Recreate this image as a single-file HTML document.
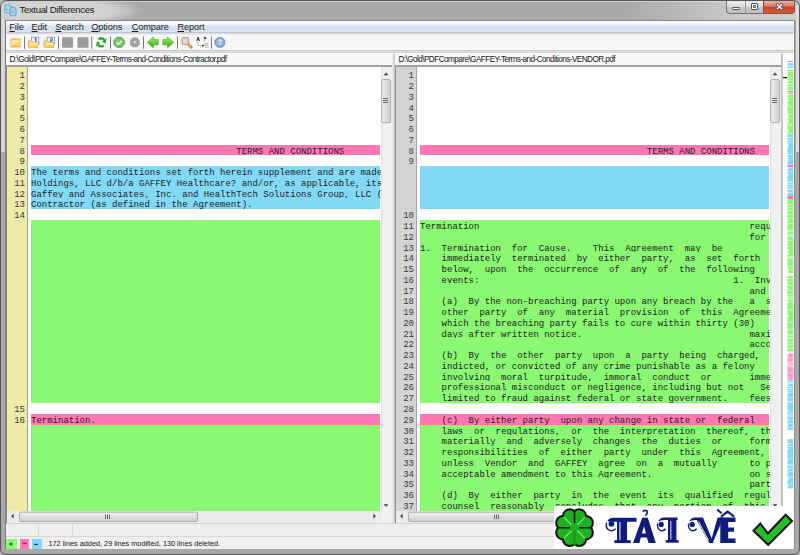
<!DOCTYPE html>
<html><head><meta charset="utf-8">
<style>
*{margin:0;padding:0;box-sizing:border-box}
html,body{width:800px;height:555px;overflow:hidden;background:#b4b4b4}
body{position:relative;font-family:"Liberation Sans",sans-serif}
.abs{position:absolute}
#frame{position:absolute;left:0;top:0;width:800px;height:555px;background:#a8a8a8;border:1px solid #555;border-radius:7px 7px 6px 6px}
#glow{position:absolute;left:1px;top:1px;width:160px;height:19px;border-radius:6px 0 0 0;background:radial-gradient(ellipse 95px 16px at 50px 10px,rgba(216,216,216,1) 0%,rgba(208,208,208,1) 65%,rgba(169,169,169,0) 100%)}
#title{position:absolute;left:19.5px;top:4px;font-size:9.6px;letter-spacing:-0.36px;color:#1a1a1a;white-space:nowrap}
.wbtn{position:absolute;top:1px;height:13px;border:1px solid #6d6d6d;border-top:none}
#client{position:absolute;left:6px;top:20px;width:788px;height:529px;background:#f0f0f0;border-top:1px solid #8a8a8a}
#menubar{position:absolute;left:6px;top:19.5px;width:788px;height:13.5px;background:linear-gradient(#fbfcfe 0,#f6f8fc 20%,#e9edf6 38%,#dae0f0 48%,#d9dff0 85%,#dde3f2 100%);border-top:1px solid #8a8a8a;border-bottom:1px solid #bcc4d6}
.menu{position:absolute;top:21.8px;font-size:9.2px;letter-spacing:-0.12px;color:#1a1a1a;white-space:nowrap}
#toolbar{position:absolute;left:6px;top:33px;width:788px;height:18px;background:linear-gradient(#d9d9d9 0,#ececec 1.5px,#f7f7f7 2.5px)}
.sep{position:absolute;top:36px;width:1px;height:13px;background:#9a9a9a}
.path{position:absolute;top:53px;height:13.8px;background:#f8f8f8;border:none;border-top:0;border-bottom:2px solid #a0a0a0;font-size:8.2px;letter-spacing:-0.56px;color:#1a1a1a;padding:2px 0 0 3.4px;white-space:nowrap;overflow:hidden}
.gut{position:absolute;top:67px;width:20px;height:444px}
.gline{position:absolute;top:67px;width:1px;height:444px;background:#a3a3a3}
.area{position:absolute;top:67px;width:354px;height:444px;background:#fff;overflow:hidden}
.bar{position:absolute;height:10.77px}
.tx{position:absolute;margin-top:2px;font-family:"Liberation Mono",monospace;font-size:9px;line-height:10.8px;white-space:pre;color:#1c1c1c}
.ln{position:absolute;margin-top:2px;width:18px;text-align:right;font-family:"Liberation Mono",monospace;font-size:9px;line-height:10.8px;color:#3a3a3a}
.vs{position:absolute;top:67px;width:11px;height:444px;background:#eaeaea;border-left:1px solid #f4f4f4}
.hs{position:absolute;top:511px;height:12px;background:#eaeaea}
.thumbv{position:absolute;background:linear-gradient(90deg,#e9e9e9,#dcdcdc 50%,#cfcfcf);border:1px solid #9c9c9c;border-radius:2px}
.thumbh{position:absolute;background:linear-gradient(#f1f1f1,#e2e2e2 50%,#d2d2d2);border:1px solid #9c9c9c;border-radius:2px}
#status{position:absolute;left:6px;top:537px;width:788px;height:12px;background:#f0eeee}
.leg{position:absolute;top:539px;width:11px;height:10px;font-size:9px;text-align:center;line-height:9px;font-weight:bold;color:#222}
</style></head><body>
<div id="frame"></div>
<div class="abs" style="left:1px;top:1px;width:798px;height:19px;border-radius:6px 6px 0 0;background:linear-gradient(90deg,rgba(168,168,168,0) 0,rgba(168,168,168,0) 620px,rgba(200,200,200,1) 730px,rgba(206,206,206,1) 798px)"></div>
<div class="abs" style="left:6px;top:1px;width:788px;height:1px;background:rgba(230,230,230,0.6)"></div>
<div class="abs" style="left:1px;top:6px;width:3.5px;height:145.5px;background:linear-gradient(90deg,#c8c8c8,#e2e2e2 50%,#c8c8c8)"></div>
<div class="abs" style="left:796px;top:6px;width:2.5px;height:145.5px;background:#dedede"></div>
<div class="abs" style="left:4.5px;top:20px;width:1.5px;height:529px;background:#7e7e7e"></div>
<div class="abs" style="left:793.5px;top:20px;width:1.2px;height:529px;background:#8e8e8e"></div>
<div id="glow"></div>
<!-- app icon -->
<svg class="abs" style="left:0;top:0" width="20" height="20" viewBox="0 0 20 20">
 <g fill="none" stroke="#4cb9f0" stroke-width="1.2">
  <path d="M6.2 4.8h3l1.8 1.8v5.2q0 1.2-1.2 1.2h-3.6q-1.2 0-1.2-1.2v-5.8q0-1.2 1.2-1.2z"/>
  <path d="M11.3 7.3h3l1.8 1.8v5.2q0 1.2-1.2 1.2h-3.6q-1.2 0-1.2-1.2v-5.8q0-1.2 1.2-1.2z" fill="#c8c8c8"/>
 </g>
 <path d="M6.5 8.2l2.6 1.3-2.6 1.3z M11.6 11.2h3l-1.5 1.8z" fill="#4cb9f0"/>
</svg>
<div id="title">Textual Differences</div>
<div class="wbtn" style="left:726px;width:38px;height:13px;border-radius:0 0 0 4px;background:linear-gradient(#eeeeee,#dcdcdc 45%,#c4c4c8 55%,#bebec4);border-color:#707070"></div>
<div class="abs" style="left:745px;top:1px;width:1px;height:12px;background:#9a9a9a"></div>
<div class="abs" style="left:732px;top:6.5px;width:8px;height:3px;background:#fafafa;border:1px solid #5a5a5a;border-radius:1px"></div>
<div class="abs" style="left:750.5px;top:3px;width:7.5px;height:7px;border:1px solid #555;background:#fff;border-radius:1px"></div>
<div class="abs" style="left:752.5px;top:5px;width:3.5px;height:2.5px;border:1px solid #666;background:#fff"></div>
<div class="wbtn" style="left:763px;width:32px;height:13px;background:linear-gradient(#eab0a0,#e08068 40%,#cc4226 55%,#d0603e);border-radius:0 0 4px 0;border-color:#8a4a40"></div>
<svg class="abs" style="left:774px;top:2px" width="11" height="10" viewBox="0 0 11 10"><path d="M3.4 2.8L7.6 6.8M7.6 2.8L3.4 6.8" stroke="#5a4a4a" stroke-width="3" stroke-linecap="square"/><path d="M3.4 2.8L7.6 6.8M7.6 2.8L3.4 6.8" stroke="#fff" stroke-width="1.5" stroke-linecap="square"/></svg>
<div id="client"></div>
<div id="menubar"></div>
<div class="menu" style="left:9.3px"><u>F</u>ile</div>
<div class="menu" style="left:31.5px"><u>E</u>dit</div>
<div class="menu" style="left:55.4px"><u>S</u>earch</div>
<div class="menu" style="left:91.3px"><u>O</u>ptions</div>
<div class="menu" style="left:131.8px"><u>C</u>ompare</div>
<div class="menu" style="left:177.6px"><u>R</u>eport</div>

<div id="toolbar"></div>
<div class="abs" style="left:6px;top:49.5px;width:788px;height:3.5px;background:linear-gradient(#c9c9c9 0,#cdcdcd 0.8px,#dcdcdc 1.2px,#dcdcdc 2.3px,#c9c9c9 2.8px,#c9c9c9 3.5px)"></div>
<svg class="abs" style="left:0;top:33px" width="240" height="18" viewBox="0 33 240 18">
 <defs>
  <linearGradient id="fold" x1="0" y1="0" x2="0" y2="1"><stop offset="0" stop-color="#fbe79a"/><stop offset="0.5" stop-color="#f4cf52"/><stop offset="1" stop-color="#f0c43a"/></linearGradient>
  <linearGradient id="grn" x1="0" y1="0" x2="0" y2="1"><stop offset="0" stop-color="#9bf05a"/><stop offset="1" stop-color="#2fae16"/></linearGradient>
  <radialGradient id="chk" cx="0.4" cy="0.35" r="0.7"><stop offset="0" stop-color="#b6e6a6"/><stop offset="1" stop-color="#3a9a3a"/></radialGradient>
  <radialGradient id="hlp" cx="0.4" cy="0.35" r="0.7"><stop offset="0" stop-color="#cfe0f5"/><stop offset="1" stop-color="#4f7fc0"/></radialGradient>
 </defs>
 <!-- folder -->
 <rect x="10.8" y="38.9" width="9.4" height="8" fill="#fbeeb4" stroke="#e6b85a" stroke-width="0.8"/>
 <rect x="10.8" y="38.9" width="9.4" height="1.3" fill="#e9c44a"/>
 <path d="M11.5 46.2 L19.6 46.2 L19.6 41.5 Q15 43 11.5 46.2Z" fill="#f4d64a" opacity="0.9"/>
 <rect x="10.8" y="45.8" width="9.4" height="1.1" fill="#eaa870"/>
<!-- seps -->
 <g fill="#7a7a7a"><rect x="24" y="36.4" width="1" height="12.4"/><rect x="58" y="36.4" width="1" height="12.4"/><rect x="91.2" y="36.4" width="1" height="12.4"/><rect x="110" y="36.4" width="1" height="12.4"/><rect x="143" y="36.4" width="1" height="12.4"/><rect x="177" y="36.4" width="1" height="12.4"/><rect x="211" y="36.4" width="1" height="12.4"/></g>
 <!-- folder + doc 1 -->
 <rect x="31.5" y="37.2" width="7.4" height="7" fill="#f4f8ff" stroke="#78a4e0" stroke-width="0.9"/>
 <path d="M34.8 38.8 q1-0.2 1-1 v4.6" stroke="#2a56a8" stroke-width="1.2" fill="none"/>
 <path d="M28.2 47.3 V40.4 H31.8 L32.6 42.2" fill="#fbe9a8" stroke="#e8b456" stroke-width="0.8"/>
 <rect x="29.2" y="42.3" width="8.8" height="5.2" fill="#fbeeb4" stroke="#e6a860" stroke-width="0.8"/>
 <rect x="29.6" y="44.8" width="8" height="2.4" fill="#f4d64a"/>
 <!-- folder + doc 2 -->
 <rect x="47.2" y="37.2" width="7.4" height="7" fill="#f4f8ff" stroke="#78a4e0" stroke-width="0.9"/>
 <path d="M50.1 38.9h2.2v1.9h-2v1.9h2.2" stroke="#2a56a8" stroke-width="1" fill="none"/>
 <path d="M43.9 47.3 V40.4 H47.5 L48.3 42.2" fill="#fbe9a8" stroke="#e8b456" stroke-width="0.8"/>
 <rect x="44.9" y="42.3" width="8.8" height="5.2" fill="#fbeeb4" stroke="#e6a860" stroke-width="0.8"/>
 <rect x="45.3" y="44.8" width="8" height="2.4" fill="#f4d64a"/>
<!-- gray squares -->
 <rect x="62" y="37.3" width="11" height="10.5" rx="1" fill="#9b9b9b"/>
 <rect x="77.5" y="37.3" width="11" height="10.5" rx="1" fill="#9b9b9b"/>
 <!-- refresh -->
 <path d="M98.6 39.3 A4 4 0 0 1 104.3 39.8" fill="none" stroke="#1e9e1e" stroke-width="2.2"/>
 <path d="M102.2 41.6 L106.6 38 L105.2 43.8 Z" fill="#18a018"/>
 <path d="M103.8 45.5 A4 4 0 0 1 98.1 45" fill="none" stroke="#1e9e1e" stroke-width="2.2"/>
 <path d="M100.2 43.2 L95.8 46.8 L97.2 41 Z" fill="#22a822"/>
 <!-- check octagon -->
 <path d="M116.9 37.4h4.4l2.9 2.9v4.1l-2.9 2.8h-4.4l-2.9-2.8v-4.1z" fill="#5cbc5c" stroke="#3c9e3c" stroke-width="0.8"/>
 <path d="M117 39h4l2 2v3l-2 2h-4l-2-2v-3z" fill="#7ccc7c"/>
 <path d="M116.8 42.5l1.6 1.6 3.2-3" stroke="#fff" stroke-width="1.4" fill="none"/>
 <!-- gray x -->
 <path d="M132.6 37.4h4.4l2.7 2.9v4.1l-2.7 2.8h-4.4l-2.6-2.8v-4.1z" fill="#a2a2a2"/>
 <path d="M133.6 41.1l2.4 2.4M136 41.1l-2.4 2.4" stroke="#f0f0f0" stroke-width="0.9"/>
<!-- arrows -->
 <path d="M147.2 42.4 L153.4 37 L153.6 39.4 L158.2 39.4 L158.2 44.8 L153.6 44.8 L153.4 47.8 Z" fill="url(#grn)" stroke="#2a9a18" stroke-width="0.5" stroke-linejoin="round"/>
 <path d="M173.8 42.4 L167.6 37 L167.4 39.4 L162.8 39.4 L162.8 44.8 L167.4 44.8 L167.6 47.8 Z" fill="url(#grn)" stroke="#2a9a18" stroke-width="0.5" stroke-linejoin="round"/>
 <!-- magnifier -->
 <path d="M187.4 43.8 L191.2 47.2" stroke="#c77c3c" stroke-width="2.8" stroke-linecap="round"/>
 <path d="M187.6 44.2 L190.6 46.8" stroke="#e8c070" stroke-width="1.2" stroke-linecap="round"/>
 <rect x="182" y="37.6" width="6.6" height="6.8" rx="2" fill="#c9e0f6" stroke="#d9a050" stroke-width="1.3"/>
 <!-- A B -->
 <path d="M196.6 41.2 L198.2 37 L199.6 41.2 M197.2 39.8h1.9" stroke="#3a3a3a" stroke-width="1" fill="none"/>
 <path d="M198 42 q-0.4 2.2 0.6 3 q0.8 0.6 3.2 0.6" stroke="#555" stroke-width="0.8" fill="none" stroke-dasharray="1 0.6"/>
 <path d="M202.2 44.2 L204.4 45.6 L202.2 47 Z" fill="#222"/>
 <path d="M204 37 h2.2 v1.8 h-2.2z" fill="#333"/>
 <path d="M204.3 39 v3" stroke="#aaa" stroke-width="0.8"/>
 <text x="204.6" y="47.6" font-family="Liberation Sans" font-size="6.4" fill="#a8a8a8">B</text>
 <!-- help -->
 <path d="M217.8 37.5h4.2l2.8 2.8v4.1l-2.8 2.8h-4.2l-2.8-2.8v-4.1z" fill="#6f98d2" stroke="#5a84c0" stroke-width="0.6"/>
 <path d="M218.2 38.8h3.4l2 2v3.2l-2 2h-3.4l-2-2v-3.2z" fill="#9ab8e4"/>
 <path d="M218.6 41.2 q0-1.5 1.4-1.5 q1.4 0 1.4 1.3 q0 0.9-1.4 1.4 v0.8" stroke="#fff" stroke-width="0.9" fill="none"/>
 <circle cx="220" cy="44.8" r="0.5" fill="#fff"/>
</svg>


<!-- left panel -->
<div class="path" style="left:6px;width:386px">D:\Gold\PDFCompare\GAFFEY-Terms-and-Conditions-Contractor.pdf</div>
<div class="gut" style="left:7px;background:#eeeba8"></div>
<div class="gline" style="left:27px"></div>
<div class="abs" style="left:6px;top:67px;width:1px;height:456px;background:#8c8c8c"></div>
<div class="area" style="left:28px"></div>
<div class="abs" style="left:31px;top:67px;width:350px;height:444px;overflow:hidden">
<div class="bar" style="left:0;top:77.66px;width:349px;background:#ff78b4"></div>
<div class="tx" style="left:0;top:77.66px">                                      TERMS AND CONDITIONS</div>
<div class="bar" style="left:0;top:99.19px;width:349px;background:#82d9f5"></div>
<div class="tx" style="left:0;top:99.19px">The terms and conditions set forth herein supplement and are made</div>
<div class="bar" style="left:0;top:109.95px;width:349px;background:#82d9f5"></div>
<div class="tx" style="left:0;top:109.95px">Holdings, LLC d/b/a GAFFEY Healthcare? and/or, as applicable, its</div>
<div class="bar" style="left:0;top:120.72px;width:349px;background:#82d9f5"></div>
<div class="tx" style="left:0;top:120.72px">Gaffey and Associates, Inc. and HealthTech Solutions Group, LLC (</div>
<div class="bar" style="left:0;top:131.48px;width:349px;background:#82d9f5"></div>
<div class="tx" style="left:0;top:131.48px">Contractor (as defined in the Agreement).</div>
<div class="bar" style="left:0;top:153.01px;width:349px;background:#8af872"></div>
<div class="bar" style="left:0;top:163.78px;width:349px;background:#8af872"></div>
<div class="bar" style="left:0;top:174.54px;width:349px;background:#8af872"></div>
<div class="bar" style="left:0;top:185.31px;width:349px;background:#8af872"></div>
<div class="bar" style="left:0;top:196.07px;width:349px;background:#8af872"></div>
<div class="bar" style="left:0;top:206.84px;width:349px;background:#8af872"></div>
<div class="bar" style="left:0;top:217.60px;width:349px;background:#8af872"></div>
<div class="bar" style="left:0;top:228.37px;width:349px;background:#8af872"></div>
<div class="bar" style="left:0;top:239.13px;width:349px;background:#8af872"></div>
<div class="bar" style="left:0;top:249.90px;width:349px;background:#8af872"></div>
<div class="bar" style="left:0;top:260.66px;width:349px;background:#8af872"></div>
<div class="bar" style="left:0;top:271.43px;width:349px;background:#8af872"></div>
<div class="bar" style="left:0;top:282.19px;width:349px;background:#8af872"></div>
<div class="bar" style="left:0;top:292.96px;width:349px;background:#8af872"></div>
<div class="bar" style="left:0;top:303.72px;width:349px;background:#8af872"></div>
<div class="bar" style="left:0;top:314.49px;width:349px;background:#8af872"></div>
<div class="bar" style="left:0;top:325.25px;width:349px;background:#8af872"></div>
<div class="bar" style="left:0;top:346.78px;width:349px;background:#ff78b4"></div>
<div class="tx" style="left:0;top:346.78px">Termination.</div>
<div class="bar" style="left:0;top:357.55px;width:349px;background:#8af872"></div>
<div class="bar" style="left:0;top:368.31px;width:349px;background:#8af872"></div>
<div class="bar" style="left:0;top:379.08px;width:349px;background:#8af872"></div>
<div class="bar" style="left:0;top:389.84px;width:349px;background:#8af872"></div>
<div class="bar" style="left:0;top:400.61px;width:349px;background:#8af872"></div>
<div class="bar" style="left:0;top:411.37px;width:349px;background:#8af872"></div>
<div class="bar" style="left:0;top:422.14px;width:349px;background:#8af872"></div>
<div class="bar" style="left:0;top:432.90px;width:349px;background:#8af872"></div>
<div class="bar" style="left:0;top:443.67px;width:349px;background:#8af872"></div>
</div>
<div class="vs" style="left:381px"></div>
<div class="hs" style="left:7px;width:385px"></div>

<!-- splitter -->
<div class="abs" style="left:392px;top:53px;width:3px;height:470px;background:linear-gradient(90deg,#f2f2f2,#c4c4c4)"></div>
<div class="abs" style="left:395px;top:65px;width:1.5px;height:458px;background:#8c8c8c"></div>

<!-- right panel -->
<div class="path" style="left:395px;width:386px">D:\Gold\PDFCompare\GAFFEY-Terms-and-Conditions-VENDOR.pdf</div>
<div class="gut" style="left:396px;background:#d4d4d4"></div>
<div class="gline" style="left:416px"></div>
<div class="area" style="left:417px"></div>
<div class="abs" style="left:420px;top:67px;width:350px;height:444px;overflow:hidden">
<div class="bar" style="left:0;top:77.66px;width:349px;background:#ff78b4"></div>
<div class="tx" style="left:0;top:77.66px">                                          TERMS AND CONDITIONS</div>
<div class="bar" style="left:0;top:99.19px;width:349px;background:#82d9f5"></div>
<div class="bar" style="left:0;top:109.95px;width:349px;background:#82d9f5"></div>
<div class="bar" style="left:0;top:120.72px;width:349px;background:#82d9f5"></div>
<div class="bar" style="left:0;top:131.48px;width:349px;background:#82d9f5"></div>
<div class="bar" style="left:0;top:153.01px;width:349px;background:#8af872"></div>
<div class="tx" style="left:0;top:153.01px">Termination                                                  requ</div>
<div class="bar" style="left:0;top:163.78px;width:349px;background:#8af872"></div>
<div class="tx" style="left:0;top:163.78px">                                                             for</div>
<div class="bar" style="left:0;top:174.54px;width:349px;background:#8af872"></div>
<div class="tx" style="left:0;top:174.54px">1.  Termination  for  Cause.    This  Agreement  may  be</div>
<div class="bar" style="left:0;top:185.31px;width:349px;background:#8af872"></div>
<div class="tx" style="left:0;top:185.31px">    immediately  terminated  by  either  party,  as  set  forth</div>
<div class="bar" style="left:0;top:196.07px;width:349px;background:#8af872"></div>
<div class="tx" style="left:0;top:196.07px">    below,  upon  the  occurrence  of  any  of  the  following</div>
<div class="bar" style="left:0;top:206.84px;width:349px;background:#8af872"></div>
<div class="tx" style="left:0;top:206.84px">    events:                                               1.  Inv</div>
<div class="bar" style="left:0;top:217.60px;width:349px;background:#8af872"></div>
<div class="tx" style="left:0;top:217.60px">                                                             and</div>
<div class="bar" style="left:0;top:228.37px;width:349px;background:#8af872"></div>
<div class="tx" style="left:0;top:228.37px">    (a)  By the non-breaching party upon any breach by the   a  s</div>
<div class="bar" style="left:0;top:239.13px;width:349px;background:#8af872"></div>
<div class="tx" style="left:0;top:239.13px">    other  party  of  any  material  provision  of  this  Agreement</div>
<div class="bar" style="left:0;top:249.90px;width:349px;background:#8af872"></div>
<div class="tx" style="left:0;top:249.90px">    which the breaching party fails to cure within thirty (30)</div>
<div class="bar" style="left:0;top:260.66px;width:349px;background:#8af872"></div>
<div class="tx" style="left:0;top:260.66px">    days after written notice.                               maxi</div>
<div class="bar" style="left:0;top:271.43px;width:349px;background:#8af872"></div>
<div class="tx" style="left:0;top:271.43px">                                                             acco</div>
<div class="bar" style="left:0;top:282.19px;width:349px;background:#8af872"></div>
<div class="tx" style="left:0;top:282.19px">    (b)  By  the  other  party  upon  a  party  being  charged,</div>
<div class="bar" style="left:0;top:292.96px;width:349px;background:#8af872"></div>
<div class="tx" style="left:0;top:292.96px">    indicted, or convicted of any crime punishable as a felony</div>
<div class="bar" style="left:0;top:303.72px;width:349px;background:#8af872"></div>
<div class="tx" style="left:0;top:303.72px">    involving  moral  turpitude,  immoral  conduct  or       imme</div>
<div class="bar" style="left:0;top:314.49px;width:349px;background:#8af872"></div>
<div class="tx" style="left:0;top:314.49px">    professional misconduct or negligence, including but not   Se</div>
<div class="bar" style="left:0;top:325.25px;width:349px;background:#8af872"></div>
<div class="tx" style="left:0;top:325.25px">    limited to fraud against federal or state government.    fees</div>
<div class="bar" style="left:0;top:346.78px;width:349px;background:#ff78b4"></div>
<div class="tx" style="left:0;top:346.78px">    (c)  By either party  upon any change in state or  federal</div>
<div class="bar" style="left:0;top:357.55px;width:349px;background:#8af872"></div>
<div class="tx" style="left:0;top:357.55px">    laws  or  regulations,  or  the  interpretation  thereof,  th</div>
<div class="bar" style="left:0;top:368.31px;width:349px;background:#8af872"></div>
<div class="tx" style="left:0;top:368.31px">    materially  and  adversely  changes  the  duties  or     form</div>
<div class="bar" style="left:0;top:379.08px;width:349px;background:#8af872"></div>
<div class="tx" style="left:0;top:379.08px">    responsibilities  of  either  party  under  this  Agreement,</div>
<div class="bar" style="left:0;top:389.84px;width:349px;background:#8af872"></div>
<div class="tx" style="left:0;top:389.84px">    unless  Vendor  and  GAFFEY  agree  on  a  mutually      to p</div>
<div class="bar" style="left:0;top:400.61px;width:349px;background:#8af872"></div>
<div class="tx" style="left:0;top:400.61px">    acceptable amendment to this Agreement.                  on s</div>
<div class="bar" style="left:0;top:411.37px;width:349px;background:#8af872"></div>
<div class="tx" style="left:0;top:411.37px">                                                             part</div>
<div class="bar" style="left:0;top:422.14px;width:349px;background:#8af872"></div>
<div class="tx" style="left:0;top:422.14px">    (d)  By  either  party  in  the  event  its  qualified  regul</div>
<div class="bar" style="left:0;top:432.90px;width:349px;background:#8af872"></div>
<div class="tx" style="left:0;top:432.90px">    counsel  reasonably  concludes  that  any  portion  of  this</div>
</div>
<div class="vs" style="left:770px"></div>
<div class="hs" style="left:396px;width:385px"></div>

<!-- overview -->
<div class="abs" style="left:781px;top:53px;width:2px;height:470px;background:#c4c4c4"></div>
<div class="abs" style="left:783px;top:53px;width:11px;height:470px;background:#fff"></div>
<svg class="abs" style="left:783px;top:52px" width="11" height="471" viewBox="783 52 11 471">
<rect x="787.5" y="61" width="5.7" height="1" fill="rgb(255, 120, 180)"/>
<rect x="787.5" y="63" width="5.7" height="1" fill="rgb(130, 217, 245)"/>
<rect x="787.5" y="64" width="5.7" height="1" fill="rgb(130, 217, 245)"/>
<rect x="787.5" y="65" width="5.7" height="1" fill="rgb(186, 234, 249)"/>
<rect x="787.5" y="66" width="5.7" height="1" fill="rgb(186, 234, 249)"/>
<rect x="787.5" y="67" width="5.7" height="1" fill="rgb(130, 217, 245)"/>
<rect x="787.5" y="70" width="5.7" height="1" fill="rgb(138, 248, 114)"/>
<rect x="787.5" y="71" width="5.7" height="1" fill="rgb(190, 251, 177)"/>
<rect x="787.5" y="72" width="5.7" height="1" fill="rgb(138, 248, 114)"/>
<rect x="787.5" y="73" width="5.7" height="1" fill="rgb(138, 248, 114)"/>
<rect x="788.5" y="74" width="4.7" height="1" fill="rgb(138, 248, 114)"/>
<rect x="787.5" y="75" width="5.7" height="1" fill="rgb(138, 248, 114)"/>
<rect x="787.5" y="76" width="5.7" height="1" fill="rgb(190, 251, 177)"/>
<rect x="787.5" y="77" width="5.7" height="1" fill="rgb(138, 248, 114)"/>
<rect x="787.5" y="78" width="5.7" height="1" fill="rgb(190, 251, 177)"/>
<rect x="787.5" y="79" width="5.7" height="1" fill="rgb(138, 248, 114)"/>
<rect x="787.5" y="80" width="5.7" height="1" fill="rgb(190, 251, 177)"/>
<rect x="788.5" y="81" width="4.7" height="1" fill="rgb(138, 248, 114)"/>
<rect x="787.5" y="82" width="5.7" height="1" fill="rgb(138, 248, 114)"/>
<rect x="787.5" y="83" width="5.7" height="1" fill="rgb(190, 251, 177)"/>
<rect x="787.5" y="84" width="5.7" height="1" fill="rgb(190, 251, 177)"/>
<rect x="787.5" y="85" width="5.7" height="1" fill="rgb(138, 248, 114)"/>
<rect x="787.5" y="86" width="5.7" height="1" fill="rgb(190, 251, 177)"/>
<rect x="787.5" y="87" width="5.7" height="1" fill="rgb(138, 248, 114)"/>
<rect x="787.5" y="88" width="5.7" height="1" fill="rgb(138, 248, 114)"/>
<rect x="787.5" y="89" width="5.7" height="1" fill="rgb(138, 248, 114)"/>
<rect x="788.5" y="90" width="4.7" height="0.5" fill="rgb(138, 248, 114)"/>
<rect x="787.5" y="91" width="5.7" height="1" fill="rgb(255, 120, 180)"/>
<rect x="787.5" y="92" width="5.7" height="1" fill="rgb(255, 180, 213)"/>
<rect x="788.5" y="93" width="4.7" height="1" fill="rgb(138, 248, 114)"/>
<rect x="787.5" y="94" width="5.7" height="1" fill="rgb(190, 251, 177)"/>
<rect x="788.5" y="95" width="4.7" height="1" fill="rgb(138, 248, 114)"/>
<rect x="787.5" y="96" width="5.7" height="1" fill="rgb(138, 248, 114)"/>
<rect x="787.5" y="97" width="5.7" height="1" fill="rgb(190, 251, 177)"/>
<rect x="787.5" y="98" width="5.7" height="1" fill="rgb(138, 248, 114)"/>
<rect x="788.5" y="99" width="4.7" height="1" fill="rgb(138, 248, 114)"/>
<rect x="788.5" y="100" width="4.7" height="1" fill="rgb(138, 248, 114)"/>
<rect x="787.5" y="101" width="5.7" height="1" fill="rgb(138, 248, 114)"/>
<rect x="787.5" y="102" width="5.7" height="1" fill="rgb(138, 248, 114)"/>
<rect x="787.5" y="103" width="5.7" height="1" fill="rgb(138, 248, 114)"/>
<rect x="788.5" y="104" width="4.7" height="1" fill="rgb(138, 248, 114)"/>
<rect x="787.5" y="105" width="5.7" height="1" fill="rgb(138, 248, 114)"/>
<rect x="787.5" y="106" width="5.7" height="1" fill="rgb(190, 251, 177)"/>
<rect x="787.5" y="107" width="5.7" height="1" fill="rgb(138, 248, 114)"/>
<rect x="787.5" y="108" width="5.7" height="1" fill="rgb(138, 248, 114)"/>
<rect x="787.5" y="109" width="5.7" height="1" fill="rgb(138, 248, 114)"/>
<rect x="787.5" y="110" width="5.7" height="1" fill="rgb(138, 248, 114)"/>
<rect x="787.5" y="111" width="5.7" height="1" fill="rgb(138, 248, 114)"/>
<rect x="787.5" y="112" width="5.7" height="1" fill="rgb(138, 248, 114)"/>
<rect x="788.5" y="113" width="4.7" height="1" fill="rgb(138, 248, 114)"/>
<rect x="787.5" y="114" width="5.7" height="1" fill="rgb(190, 251, 177)"/>
<rect x="788.5" y="115" width="4.7" height="1" fill="rgb(138, 248, 114)"/>
<rect x="788.5" y="116" width="4.7" height="1" fill="rgb(138, 248, 114)"/>
<rect x="788.5" y="117" width="4.7" height="1" fill="rgb(138, 248, 114)"/>
<rect x="787.5" y="118" width="5.7" height="1" fill="rgb(190, 251, 177)"/>
<rect x="787.5" y="119" width="5.7" height="1" fill="rgb(138, 248, 114)"/>
<rect x="788.5" y="120" width="4.7" height="1" fill="rgb(138, 248, 114)"/>
<rect x="788.5" y="121" width="4.7" height="1" fill="rgb(138, 248, 114)"/>
<rect x="788.5" y="122" width="4.7" height="1" fill="rgb(138, 248, 114)"/>
<rect x="787.5" y="123" width="5.7" height="1" fill="rgb(138, 248, 114)"/>
<rect x="787.5" y="124" width="5.7" height="1" fill="rgb(190, 251, 177)"/>
<rect x="787.5" y="125" width="5.7" height="1" fill="rgb(138, 248, 114)"/>
<rect x="787.5" y="126" width="5.7" height="1" fill="rgb(190, 251, 177)"/>
<rect x="787.5" y="127" width="5.7" height="1" fill="rgb(138, 248, 114)"/>
<rect x="787.5" y="128" width="5.7" height="1" fill="rgb(138, 248, 114)"/>
<rect x="787.5" y="129" width="5.7" height="1" fill="rgb(138, 248, 114)"/>
<rect x="788.5" y="130" width="4.7" height="1" fill="rgb(138, 248, 114)"/>
<rect x="788.5" y="131" width="4.7" height="1" fill="rgb(138, 248, 114)"/>
<rect x="787.5" y="132" width="5.7" height="1" fill="rgb(138, 248, 114)"/>
<rect x="787.5" y="133" width="5.7" height="1" fill="rgb(190, 251, 177)"/>
<rect x="787.5" y="134" width="5.7" height="1" fill="rgb(130, 217, 245)"/>
<rect x="787.5" y="135" width="5.7" height="1" fill="rgb(130, 217, 245)"/>
<rect x="787.5" y="136" width="5.7" height="1" fill="rgb(130, 217, 245)"/>
<rect x="787.5" y="137" width="5.7" height="1" fill="rgb(186, 234, 249)"/>
<rect x="788.5" y="138" width="4.7" height="1" fill="rgb(130, 217, 245)"/>
<rect x="787.5" y="139" width="5.7" height="1" fill="rgb(130, 217, 245)"/>
<rect x="787.5" y="140" width="5.7" height="1" fill="rgb(186, 234, 249)"/>
<rect x="787.5" y="141" width="5.7" height="1" fill="rgb(130, 217, 245)"/>
<rect x="787.5" y="142" width="5.7" height="1" fill="rgb(186, 234, 249)"/>
<rect x="787.5" y="143" width="5.7" height="1" fill="rgb(130, 217, 245)"/>
<rect x="788.5" y="144" width="4.7" height="1" fill="rgb(130, 217, 245)"/>
<rect x="788.5" y="145" width="4.7" height="1" fill="rgb(130, 217, 245)"/>
<rect x="787.5" y="146" width="5.7" height="1" fill="rgb(130, 217, 245)"/>
<rect x="788.5" y="147" width="4.7" height="1" fill="rgb(130, 217, 245)"/>
<rect x="787.5" y="148" width="5.7" height="1" fill="rgb(130, 217, 245)"/>
<rect x="787.5" y="149" width="5.7" height="1" fill="rgb(130, 217, 245)"/>
<rect x="787.5" y="150" width="5.7" height="1" fill="rgb(130, 217, 245)"/>
<rect x="787.5" y="151" width="5.7" height="1" fill="rgb(130, 217, 245)"/>
<rect x="787.5" y="152" width="5.7" height="1" fill="rgb(130, 217, 245)"/>
<rect x="787.5" y="153" width="5.7" height="1" fill="rgb(130, 217, 245)"/>
<rect x="787.5" y="154" width="5.7" height="1" fill="rgb(186, 234, 249)"/>
<rect x="787.5" y="155" width="5.7" height="1" fill="rgb(130, 217, 245)"/>
<rect x="787.5" y="156" width="5.7" height="1" fill="rgb(130, 217, 245)"/>
<rect x="788.5" y="157" width="4.7" height="1" fill="rgb(130, 217, 245)"/>
<rect x="787.5" y="158" width="5.7" height="1" fill="rgb(130, 217, 245)"/>
<rect x="788.5" y="159" width="4.7" height="1" fill="rgb(130, 217, 245)"/>
<rect x="788.5" y="160" width="4.7" height="1" fill="rgb(130, 217, 245)"/>
<rect x="787.5" y="161" width="5.7" height="1" fill="rgb(130, 217, 245)"/>
<rect x="787.5" y="162" width="5.7" height="1" fill="rgb(130, 217, 245)"/>
<rect x="787.5" y="163" width="5.7" height="1" fill="rgb(130, 217, 245)"/>
<rect x="787.5" y="164" width="5.7" height="1" fill="rgb(255, 180, 213)"/>
<rect x="787.5" y="165" width="5.7" height="1" fill="rgb(255, 120, 180)"/>
<rect x="787.5" y="166" width="5.7" height="1" fill="rgb(255, 120, 180)"/>
<rect x="787.5" y="167" width="5.7" height="1" fill="rgb(186, 234, 249)"/>
<rect x="788.5" y="168" width="4.7" height="1" fill="rgb(130, 217, 245)"/>
<rect x="787.5" y="169" width="5.7" height="1" fill="rgb(130, 217, 245)"/>
<rect x="787.5" y="170" width="5.7" height="1" fill="rgb(130, 217, 245)"/>
<rect x="787.5" y="171" width="5.7" height="1" fill="rgb(186, 234, 249)"/>
<rect x="787.5" y="172" width="5.7" height="1" fill="rgb(130, 217, 245)"/>
<rect x="787.5" y="173" width="5.7" height="1" fill="rgb(130, 217, 245)"/>
<rect x="788.5" y="174" width="4.7" height="1" fill="rgb(130, 217, 245)"/>
<rect x="787.5" y="175" width="5.7" height="1" fill="rgb(130, 217, 245)"/>
<rect x="787.5" y="176" width="5.7" height="1" fill="rgb(130, 217, 245)"/>
<rect x="787.5" y="177" width="5.7" height="1" fill="rgb(130, 217, 245)"/>
<rect x="787.5" y="178" width="5.7" height="1" fill="rgb(130, 217, 245)"/>
<rect x="787.5" y="179" width="5.7" height="1" fill="rgb(130, 217, 245)"/>
<rect x="787.5" y="180" width="5.7" height="1" fill="rgb(130, 217, 245)"/>
<rect x="787.5" y="181" width="5.7" height="1" fill="rgb(186, 234, 249)"/>
<rect x="787.5" y="182" width="5.7" height="1" fill="rgb(186, 234, 249)"/>
<rect x="787.5" y="183" width="5.7" height="1" fill="rgb(130, 217, 245)"/>
<rect x="787.5" y="184" width="5.7" height="1" fill="rgb(186, 234, 249)"/>
<rect x="787.5" y="185" width="5.7" height="1" fill="rgb(130, 217, 245)"/>
<rect x="787.5" y="186" width="5.7" height="1" fill="rgb(186, 234, 249)"/>
<rect x="787.5" y="187" width="5.7" height="1" fill="rgb(130, 217, 245)"/>
<rect x="787.5" y="188" width="5.7" height="1" fill="rgb(186, 234, 249)"/>
<rect x="787.5" y="189" width="5.7" height="1" fill="rgb(186, 234, 249)"/>
<rect x="787.5" y="190" width="5.7" height="1" fill="rgb(130, 217, 245)"/>
<rect x="787.5" y="191" width="5.7" height="1" fill="rgb(130, 217, 245)"/>
<rect x="787.5" y="192" width="5.7" height="1" fill="rgb(186, 234, 249)"/>
<rect x="788.5" y="193" width="4.7" height="1" fill="rgb(130, 217, 245)"/>
<rect x="787.5" y="194" width="5.7" height="1" fill="rgb(130, 217, 245)"/>
<rect x="787.5" y="195" width="5.7" height="1" fill="rgb(130, 217, 245)"/>
<rect x="787.5" y="196" width="5.7" height="1" fill="rgb(255, 120, 180)"/>
<rect x="787.5" y="197" width="5.7" height="1" fill="rgb(255, 120, 180)"/>
<rect x="787.5" y="198" width="5.7" height="1" fill="rgb(255, 120, 180)"/>
<rect x="787.5" y="199" width="5.7" height="1" fill="rgb(138, 248, 114)"/>
<rect x="787.5" y="200" width="5.7" height="1" fill="rgb(138, 248, 114)"/>
<rect x="787.5" y="201" width="5.7" height="1" fill="rgb(138, 248, 114)"/>
<rect x="787.5" y="202" width="5.7" height="1" fill="rgb(138, 248, 114)"/>
<rect x="787.5" y="203" width="5.7" height="1" fill="rgb(138, 248, 114)"/>
<rect x="787.5" y="204" width="5.7" height="1" fill="rgb(190, 251, 177)"/>
<rect x="787.5" y="205" width="5.7" height="1" fill="rgb(138, 248, 114)"/>
<rect x="787.5" y="206" width="5.7" height="1" fill="rgb(138, 248, 114)"/>
<rect x="787.5" y="207" width="5.7" height="1" fill="rgb(190, 251, 177)"/>
<rect x="787.5" y="208" width="5.7" height="1" fill="rgb(138, 248, 114)"/>
<rect x="787.5" y="209" width="5.7" height="1" fill="rgb(138, 248, 114)"/>
<rect x="787.5" y="210" width="5.7" height="1" fill="rgb(190, 251, 177)"/>
<rect x="787.5" y="211" width="5.7" height="1" fill="rgb(138, 248, 114)"/>
<rect x="787.5" y="212" width="5.7" height="1" fill="rgb(138, 248, 114)"/>
<rect x="787.5" y="213" width="5.7" height="1" fill="rgb(138, 248, 114)"/>
<rect x="787.5" y="214" width="5.7" height="1" fill="rgb(190, 251, 177)"/>
<rect x="787.5" y="215" width="5.7" height="1" fill="rgb(138, 248, 114)"/>
<rect x="787.5" y="216" width="5.7" height="1" fill="rgb(138, 248, 114)"/>
<rect x="787.5" y="217" width="5.7" height="1" fill="rgb(138, 248, 114)"/>
<rect x="787.5" y="218" width="5.7" height="1" fill="rgb(190, 251, 177)"/>
<rect x="787.5" y="219" width="5.7" height="1" fill="rgb(138, 248, 114)"/>
<rect x="788.5" y="220" width="4.7" height="1" fill="rgb(138, 248, 114)"/>
<rect x="787.5" y="221" width="5.7" height="1" fill="rgb(138, 248, 114)"/>
<rect x="787.5" y="222" width="5.7" height="1" fill="rgb(138, 248, 114)"/>
<rect x="787.5" y="223" width="5.7" height="1" fill="rgb(190, 251, 177)"/>
<rect x="788.5" y="224" width="4.7" height="1" fill="rgb(138, 248, 114)"/>
<rect x="787.5" y="225" width="5.7" height="1" fill="rgb(138, 248, 114)"/>
<rect x="787.5" y="226" width="5.7" height="1" fill="rgb(138, 248, 114)"/>
<rect x="787.5" y="227" width="5.7" height="1" fill="rgb(138, 248, 114)"/>
<rect x="787.5" y="228" width="5.7" height="1" fill="rgb(138, 248, 114)"/>
<rect x="787.5" y="229" width="5.7" height="1" fill="rgb(138, 248, 114)"/>
<rect x="787.5" y="230" width="5.7" height="1" fill="rgb(190, 251, 177)"/>
<rect x="787.5" y="231" width="5.7" height="1" fill="rgb(190, 251, 177)"/>
<rect x="787.5" y="232" width="5.7" height="1" fill="rgb(138, 248, 114)"/>
<rect x="787.5" y="233" width="5.7" height="1" fill="rgb(138, 248, 114)"/>
<rect x="787.5" y="234" width="5.7" height="1" fill="rgb(190, 251, 177)"/>
<rect x="787.5" y="235" width="5.7" height="1" fill="rgb(190, 251, 177)"/>
<rect x="787.5" y="236" width="5.7" height="1" fill="rgb(190, 251, 177)"/>
<rect x="787.5" y="237" width="5.7" height="1" fill="rgb(138, 248, 114)"/>
<rect x="787.5" y="238" width="5.7" height="1" fill="rgb(138, 248, 114)"/>
<rect x="787.5" y="239" width="5.7" height="1" fill="rgb(138, 248, 114)"/>
<rect x="787.5" y="240" width="5.7" height="1" fill="rgb(190, 251, 177)"/>
<rect x="787.5" y="241" width="5.7" height="1" fill="rgb(138, 248, 114)"/>
<rect x="787.5" y="242" width="5.7" height="1" fill="rgb(138, 248, 114)"/>
<rect x="787.5" y="243" width="5.7" height="1" fill="rgb(138, 248, 114)"/>
<rect x="787.5" y="244" width="5.7" height="1" fill="rgb(138, 248, 114)"/>
<rect x="787.5" y="245" width="5.7" height="1" fill="rgb(138, 248, 114)"/>
<rect x="788.5" y="246" width="4.7" height="1" fill="rgb(138, 248, 114)"/>
<rect x="787.5" y="247" width="5.7" height="1" fill="rgb(138, 248, 114)"/>
<rect x="787.5" y="248" width="5.7" height="1" fill="rgb(138, 248, 114)"/>
<rect x="788.5" y="249" width="4.7" height="1" fill="rgb(138, 248, 114)"/>
<rect x="788.5" y="250" width="4.7" height="1" fill="rgb(138, 248, 114)"/>
<rect x="788.5" y="251" width="4.7" height="1" fill="rgb(138, 248, 114)"/>
<rect x="787.5" y="252" width="5.7" height="1" fill="rgb(138, 248, 114)"/>
<rect x="788.5" y="253" width="4.7" height="1" fill="rgb(138, 248, 114)"/>
<rect x="788.5" y="254" width="4.7" height="1" fill="rgb(138, 248, 114)"/>
<rect x="787.5" y="255" width="5.7" height="1" fill="rgb(138, 248, 114)"/>
<rect x="787.5" y="256" width="5.7" height="1" fill="rgb(190, 251, 177)"/>
<rect x="787.5" y="257" width="5.7" height="1" fill="rgb(190, 251, 177)"/>
<rect x="787.5" y="258" width="5.7" height="1" fill="rgb(190, 251, 177)"/>
<rect x="787.5" y="259" width="5.7" height="1" fill="rgb(138, 248, 114)"/>
<rect x="787.5" y="260" width="5.7" height="1" fill="rgb(138, 248, 114)"/>
<rect x="787.5" y="261" width="5.7" height="1" fill="rgb(138, 248, 114)"/>
<rect x="787.5" y="262" width="5.7" height="1" fill="rgb(138, 248, 114)"/>
<rect x="787.5" y="263" width="5.7" height="1" fill="rgb(138, 248, 114)"/>
<rect x="787.5" y="264" width="5.7" height="1" fill="rgb(138, 248, 114)"/>
<rect x="787.5" y="265" width="5.7" height="1" fill="rgb(138, 248, 114)"/>
<rect x="787.5" y="266" width="5.7" height="1" fill="rgb(190, 251, 177)"/>
<rect x="787.5" y="267" width="5.7" height="1" fill="rgb(138, 248, 114)"/>
<rect x="788.5" y="268" width="4.7" height="1" fill="rgb(138, 248, 114)"/>
<rect x="787.5" y="269" width="5.7" height="1" fill="rgb(190, 251, 177)"/>
<rect x="788.5" y="270" width="4.7" height="1" fill="rgb(138, 248, 114)"/>
<rect x="788.5" y="271" width="4.7" height="1" fill="rgb(138, 248, 114)"/>
<rect x="788.5" y="272" width="4.7" height="1" fill="rgb(138, 248, 114)"/>
<rect x="787.5" y="276" width="5.7" height="1" fill="rgb(138, 248, 114)"/>
<rect x="787.5" y="277" width="5.7" height="1" fill="rgb(138, 248, 114)"/>
<rect x="787.5" y="278" width="5.7" height="1" fill="rgb(190, 251, 177)"/>
<rect x="787.5" y="279" width="5.7" height="1" fill="rgb(138, 248, 114)"/>
<rect x="787.5" y="280" width="5.7" height="1" fill="rgb(138, 248, 114)"/>
<rect x="787.5" y="281" width="5.7" height="1" fill="rgb(190, 251, 177)"/>
<rect x="787.5" y="282" width="5.7" height="1" fill="rgb(138, 248, 114)"/>
<rect x="787.5" y="283" width="5.7" height="1" fill="rgb(138, 248, 114)"/>
<rect x="788.5" y="284" width="4.7" height="1" fill="rgb(138, 248, 114)"/>
<rect x="787.5" y="285" width="5.7" height="1" fill="rgb(190, 251, 177)"/>
<rect x="787.5" y="286" width="5.7" height="1" fill="rgb(138, 248, 114)"/>
<rect x="787.5" y="287" width="5.7" height="1" fill="rgb(138, 248, 114)"/>
<rect x="788.5" y="288" width="4.7" height="1" fill="rgb(138, 248, 114)"/>
<rect x="787.5" y="289" width="5.7" height="1" fill="rgb(138, 248, 114)"/>
<rect x="787.5" y="290" width="5.7" height="1" fill="rgb(190, 251, 177)"/>
<rect x="787.5" y="291" width="5.7" height="1" fill="rgb(138, 248, 114)"/>
<rect x="787.5" y="292" width="5.7" height="1" fill="rgb(138, 248, 114)"/>
<rect x="787.5" y="293" width="5.7" height="1" fill="rgb(138, 248, 114)"/>
<rect x="787.5" y="294" width="5.7" height="1" fill="rgb(190, 251, 177)"/>
<rect x="787.5" y="295" width="5.7" height="1" fill="rgb(138, 248, 114)"/>
<rect x="787.5" y="296" width="5.7" height="1" fill="rgb(190, 251, 177)"/>
<rect x="788.5" y="297" width="4.7" height="1" fill="rgb(138, 248, 114)"/>
<rect x="787.5" y="298" width="5.7" height="1" fill="rgb(190, 251, 177)"/>
<rect x="787.5" y="299" width="5.7" height="1" fill="rgb(190, 251, 177)"/>
<rect x="787.5" y="300" width="5.7" height="1" fill="rgb(138, 248, 114)"/>
<rect x="787.5" y="301" width="5.7" height="1" fill="rgb(190, 251, 177)"/>
<rect x="788.5" y="302" width="4.7" height="1" fill="rgb(138, 248, 114)"/>
<rect x="787.5" y="303" width="5.7" height="1" fill="rgb(138, 248, 114)"/>
<rect x="787.5" y="304" width="5.7" height="1" fill="rgb(138, 248, 114)"/>
<rect x="787.5" y="305" width="5.7" height="1" fill="rgb(138, 248, 114)"/>
<rect x="787.5" y="306" width="5.7" height="1" fill="rgb(138, 248, 114)"/>
<rect x="787.5" y="307" width="5.7" height="1" fill="rgb(138, 248, 114)"/>
<rect x="787.5" y="308" width="5.7" height="1" fill="rgb(138, 248, 114)"/>
<rect x="787.5" y="309" width="5.7" height="1" fill="rgb(190, 251, 177)"/>
<rect x="787.5" y="310" width="5.7" height="1" fill="rgb(138, 248, 114)"/>
<rect x="787.5" y="311" width="5.7" height="1" fill="rgb(138, 248, 114)"/>
<rect x="787.5" y="312" width="5.7" height="1" fill="rgb(138, 248, 114)"/>
<rect x="787.5" y="313" width="5.7" height="1" fill="rgb(138, 248, 114)"/>
<rect x="787.5" y="314" width="5.7" height="1" fill="rgb(138, 248, 114)"/>
<rect x="788.5" y="315" width="4.7" height="1" fill="rgb(138, 248, 114)"/>
<rect x="788.5" y="316" width="4.7" height="1" fill="rgb(138, 248, 114)"/>
<rect x="787.5" y="317" width="5.7" height="1" fill="rgb(138, 248, 114)"/>
<rect x="787.5" y="318" width="5.7" height="1" fill="rgb(138, 248, 114)"/>
<rect x="787.5" y="319" width="5.7" height="1" fill="rgb(138, 248, 114)"/>
<rect x="787.5" y="320" width="5.7" height="1" fill="rgb(138, 248, 114)"/>
<rect x="787.5" y="321" width="5.7" height="1" fill="rgb(138, 248, 114)"/>
<rect x="787.5" y="322" width="5.7" height="1" fill="rgb(190, 251, 177)"/>
<rect x="787.5" y="323" width="5.7" height="1" fill="rgb(138, 248, 114)"/>
<rect x="787.5" y="324" width="5.7" height="1" fill="rgb(138, 248, 114)"/>
<rect x="787.5" y="325" width="5.7" height="1" fill="rgb(138, 248, 114)"/>
<rect x="787.5" y="326" width="5.7" height="1" fill="rgb(138, 248, 114)"/>
<rect x="787.5" y="327" width="5.7" height="1" fill="rgb(138, 248, 114)"/>
<rect x="787.5" y="328" width="5.7" height="1" fill="rgb(138, 248, 114)"/>
<rect x="787.5" y="329" width="5.7" height="1" fill="rgb(190, 251, 177)"/>
<rect x="787.5" y="330" width="5.7" height="1" fill="rgb(138, 248, 114)"/>
<rect x="787.5" y="331" width="5.7" height="1" fill="rgb(138, 248, 114)"/>
<rect x="787.5" y="332" width="5.7" height="1" fill="rgb(138, 248, 114)"/>
<rect x="787.5" y="333" width="5.7" height="1" fill="rgb(138, 248, 114)"/>
<rect x="787.5" y="334" width="5.7" height="1" fill="rgb(190, 251, 177)"/>
<rect x="787.5" y="335" width="5.7" height="1" fill="rgb(190, 251, 177)"/>
<rect x="787.5" y="336" width="5.7" height="1" fill="rgb(138, 248, 114)"/>
<rect x="787.5" y="337" width="5.7" height="1" fill="rgb(190, 251, 177)"/>
<rect x="787.5" y="338" width="5.7" height="1" fill="rgb(190, 251, 177)"/>
<rect x="787.5" y="339" width="5.7" height="1" fill="rgb(138, 248, 114)"/>
<rect x="787.5" y="340" width="5.7" height="1" fill="rgb(138, 248, 114)"/>
<rect x="787.5" y="341" width="5.7" height="1" fill="rgb(138, 248, 114)"/>
<rect x="787.5" y="342" width="5.7" height="1" fill="rgb(190, 251, 177)"/>
<rect x="787.5" y="343" width="5.7" height="1" fill="rgb(138, 248, 114)"/>
<rect x="787.5" y="344" width="5.7" height="1" fill="rgb(190, 251, 177)"/>
<rect x="787.5" y="345" width="5.7" height="1" fill="rgb(138, 248, 114)"/>
<rect x="787.5" y="346" width="5.7" height="1" fill="rgb(138, 248, 114)"/>
<rect x="787.5" y="347" width="5.7" height="1" fill="rgb(138, 248, 114)"/>
<rect x="787.5" y="348" width="5.7" height="1" fill="rgb(190, 251, 177)"/>
<rect x="787.5" y="349" width="5.7" height="1" fill="rgb(138, 248, 114)"/>
<rect x="787.5" y="350" width="5.7" height="1" fill="rgb(138, 248, 114)"/>
<rect x="787.5" y="351" width="5.7" height="0.5" fill="rgb(138, 248, 114)"/>
<rect x="788.5" y="353.5" width="4.7" height="1" fill="rgb(255, 120, 180)"/>
<rect x="788.5" y="354.5" width="4.7" height="1" fill="rgb(255, 120, 180)"/>
<rect x="787.5" y="355.5" width="5.7" height="1" fill="rgb(255, 120, 180)"/>
<rect x="788.5" y="356.5" width="4.7" height="1" fill="rgb(255, 120, 180)"/>
<rect x="787.5" y="357.5" width="5.7" height="1" fill="rgb(255, 180, 213)"/>
<rect x="787.5" y="358.5" width="5.7" height="1" fill="rgb(255, 120, 180)"/>
<rect x="787.5" y="359.5" width="5.7" height="1" fill="rgb(255, 120, 180)"/>
<rect x="787.5" y="360.5" width="5.7" height="1" fill="rgb(255, 120, 180)"/>
<rect x="787.5" y="361.5" width="5.7" height="1" fill="rgb(255, 180, 213)"/>
<rect x="787.5" y="362.5" width="5.7" height="1" fill="rgb(255, 180, 213)"/>
<rect x="788.5" y="363.5" width="4.7" height="1" fill="rgb(255, 120, 180)"/>
<rect x="787.5" y="364.5" width="5.7" height="1" fill="rgb(255, 180, 213)"/>
<rect x="787.5" y="365.5" width="5.7" height="1" fill="rgb(255, 180, 213)"/>
<rect x="787.5" y="366.5" width="5.7" height="1" fill="rgb(255, 180, 213)"/>
<rect x="787.5" y="367.5" width="5.7" height="1" fill="rgb(255, 120, 180)"/>
<rect x="787.5" y="368.5" width="5.7" height="1" fill="rgb(255, 120, 180)"/>
<rect x="787.5" y="369.5" width="5.7" height="1" fill="rgb(255, 120, 180)"/>
<rect x="787.5" y="370.5" width="5.7" height="1" fill="rgb(255, 120, 180)"/>
<rect x="787.5" y="371.5" width="5.7" height="1" fill="rgb(255, 120, 180)"/>
<rect x="787.5" y="372.5" width="5.7" height="1" fill="rgb(255, 180, 213)"/>
<rect x="787.5" y="373.5" width="5.7" height="1" fill="rgb(255, 120, 180)"/>
<rect x="787.5" y="374.5" width="5.7" height="1" fill="rgb(255, 120, 180)"/>
<rect x="787.5" y="375.5" width="5.7" height="1" fill="rgb(255, 120, 180)"/>
<rect x="788.5" y="376.5" width="4.7" height="1" fill="rgb(255, 120, 180)"/>
<rect x="787.5" y="377.5" width="5.7" height="1" fill="rgb(255, 120, 180)"/>
<rect x="787.5" y="378.5" width="5.7" height="1" fill="rgb(255, 120, 180)"/>
<rect x="787.5" y="379.5" width="5.7" height="0.5" fill="rgb(255, 180, 213)"/>
<rect x="787.5" y="380" width="5.7" height="1" fill="rgb(130, 217, 245)"/>
<rect x="787.5" y="381" width="5.7" height="1" fill="rgb(186, 234, 249)"/>
<rect x="787.5" y="382" width="5.7" height="1" fill="rgb(186, 234, 249)"/>
<rect x="787.5" y="383" width="5.7" height="1" fill="rgb(186, 234, 249)"/>
<rect x="788.5" y="384" width="4.7" height="1" fill="rgb(130, 217, 245)"/>
<rect x="787.5" y="385" width="5.7" height="1" fill="rgb(130, 217, 245)"/>
<rect x="787.5" y="386" width="5.7" height="1" fill="rgb(186, 234, 249)"/>
<rect x="787.5" y="387" width="5.7" height="1" fill="rgb(130, 217, 245)"/>
<rect x="787.5" y="388" width="5.7" height="1" fill="rgb(186, 234, 249)"/>
<rect x="787.5" y="389" width="5.7" height="1" fill="rgb(130, 217, 245)"/>
<rect x="787.5" y="390" width="5.7" height="1" fill="rgb(186, 234, 249)"/>
<rect x="787.5" y="391" width="5.7" height="1" fill="rgb(130, 217, 245)"/>
<rect x="787.5" y="392" width="5.7" height="1" fill="rgb(186, 234, 249)"/>
<rect x="788.5" y="393" width="4.7" height="1" fill="rgb(130, 217, 245)"/>
<rect x="787.5" y="394" width="5.7" height="1" fill="rgb(130, 217, 245)"/>
<rect x="787.5" y="395" width="5.7" height="1" fill="rgb(130, 217, 245)"/>
<rect x="787.5" y="396" width="5.7" height="1" fill="rgb(130, 217, 245)"/>
<rect x="787.5" y="397" width="5.7" height="1" fill="rgb(186, 234, 249)"/>
<rect x="787.5" y="398" width="5.7" height="1" fill="rgb(130, 217, 245)"/>
<rect x="787.5" y="399" width="5.7" height="1" fill="rgb(130, 217, 245)"/>
<rect x="787.5" y="400" width="5.7" height="1" fill="rgb(130, 217, 245)"/>
<rect x="787.5" y="401" width="5.7" height="1" fill="rgb(186, 234, 249)"/>
<rect x="787.5" y="402" width="5.7" height="1" fill="rgb(186, 234, 249)"/>
<rect x="787.5" y="403" width="5.7" height="1" fill="rgb(130, 217, 245)"/>
<rect x="787.5" y="404" width="5.7" height="1" fill="rgb(130, 217, 245)"/>
<rect x="787.5" y="405" width="5.7" height="1" fill="rgb(130, 217, 245)"/>
<rect x="787.5" y="406" width="5.7" height="1" fill="rgb(130, 217, 245)"/>
<rect x="787.5" y="407" width="5.7" height="1" fill="rgb(130, 217, 245)"/>
<rect x="787.5" y="408" width="5.7" height="1" fill="rgb(130, 217, 245)"/>
<rect x="787.5" y="409" width="5.7" height="1" fill="rgb(130, 217, 245)"/>
<rect x="788.5" y="410" width="4.7" height="1" fill="rgb(130, 217, 245)"/>
<rect x="787.5" y="411" width="5.7" height="1" fill="rgb(130, 217, 245)"/>
<rect x="787.5" y="412" width="5.7" height="1" fill="rgb(186, 234, 249)"/>
<rect x="787.5" y="413" width="5.7" height="1" fill="rgb(130, 217, 245)"/>
<rect x="787.5" y="414" width="5.7" height="1" fill="rgb(186, 234, 249)"/>
<rect x="787.5" y="415" width="5.7" height="1" fill="rgb(186, 234, 249)"/>
<rect x="787.5" y="416" width="5.7" height="1" fill="rgb(186, 234, 249)"/>
<rect x="787.5" y="417" width="5.7" height="1" fill="rgb(130, 217, 245)"/>
<rect x="787.5" y="418" width="5.7" height="1" fill="rgb(130, 217, 245)"/>
<rect x="787.5" y="419" width="5.7" height="1" fill="rgb(186, 234, 249)"/>
<rect x="788.5" y="420" width="4.7" height="1" fill="rgb(130, 217, 245)"/>
<rect x="787.5" y="421" width="5.7" height="1" fill="rgb(130, 217, 245)"/>
<rect x="787.5" y="422" width="5.7" height="1" fill="rgb(130, 217, 245)"/>
<rect x="787.5" y="423" width="5.7" height="1" fill="rgb(186, 234, 249)"/>
<rect x="788.5" y="424" width="4.7" height="1" fill="rgb(130, 217, 245)"/>
<rect x="787.5" y="425" width="5.7" height="1" fill="rgb(130, 217, 245)"/>
<rect x="787.5" y="426" width="5.7" height="1" fill="rgb(130, 217, 245)"/>
<rect x="787.5" y="427" width="5.7" height="1" fill="rgb(186, 234, 249)"/>
<rect x="787.5" y="428" width="5.7" height="1" fill="rgb(130, 217, 245)"/>
<rect x="787.5" y="429" width="5.7" height="1" fill="rgb(130, 217, 245)"/>
<rect x="787.5" y="439" width="5.7" height="1" fill="rgb(130, 217, 245)"/>
<rect x="787.5" y="440" width="5.7" height="1" fill="rgb(130, 217, 245)"/>
<rect x="787.5" y="441" width="5.7" height="1" fill="rgb(130, 217, 245)"/>
<rect x="787.5" y="442" width="5.7" height="1" fill="rgb(130, 217, 245)"/>
<rect x="787.5" y="443" width="5.7" height="1" fill="rgb(186, 234, 249)"/>
<rect x="788.5" y="444" width="4.7" height="1" fill="rgb(130, 217, 245)"/>
<rect x="787.5" y="445" width="5.7" height="1" fill="rgb(130, 217, 245)"/>
<rect x="787.5" y="446" width="5.7" height="1" fill="rgb(186, 234, 249)"/>
<rect x="787.5" y="447" width="5.7" height="1" fill="rgb(130, 217, 245)"/>
<rect x="788.5" y="448" width="4.7" height="1" fill="rgb(130, 217, 245)"/>
<rect x="787.5" y="449" width="5.7" height="1" fill="rgb(130, 217, 245)"/>
<rect x="787.5" y="450" width="5.7" height="1" fill="rgb(130, 217, 245)"/>
<rect x="787.5" y="451" width="5.7" height="1" fill="rgb(130, 217, 245)"/>
<rect x="787.5" y="452" width="5.7" height="1" fill="rgb(130, 217, 245)"/>
<rect x="787.5" y="453" width="5.7" height="1" fill="rgb(130, 217, 245)"/>
<rect x="787.5" y="454" width="5.7" height="1" fill="rgb(130, 217, 245)"/>
<rect x="787.5" y="455" width="5.7" height="1" fill="rgb(130, 217, 245)"/>
<rect x="787.5" y="456" width="5.7" height="1" fill="rgb(130, 217, 245)"/>
<rect x="787.5" y="457" width="5.7" height="1" fill="rgb(130, 217, 245)"/>
<rect x="787.5" y="458" width="5.7" height="1" fill="rgb(186, 234, 249)"/>
<rect x="787.5" y="459" width="5.7" height="1" fill="rgb(130, 217, 245)"/>
<rect x="788.5" y="460" width="4.7" height="1" fill="rgb(130, 217, 245)"/>
<rect x="787.5" y="461" width="5.7" height="1" fill="rgb(130, 217, 245)"/>
<rect x="787.5" y="462" width="5.7" height="1" fill="rgb(130, 217, 245)"/>
<rect x="787.5" y="463" width="5.7" height="1" fill="rgb(130, 217, 245)"/>
<rect x="787.5" y="464" width="5.7" height="1" fill="rgb(186, 234, 249)"/>
<rect x="787.5" y="465" width="5.7" height="1" fill="rgb(186, 234, 249)"/>
<rect x="787.5" y="466" width="5.7" height="1" fill="rgb(130, 217, 245)"/>
<rect x="787.5" y="467" width="5.7" height="1" fill="rgb(130, 217, 245)"/>
<rect x="787.5" y="468" width="5.7" height="1" fill="rgb(186, 234, 249)"/>
<rect x="788.5" y="469" width="4.7" height="1" fill="rgb(130, 217, 245)"/>
<rect x="787.5" y="470" width="5.7" height="1" fill="rgb(130, 217, 245)"/>
<rect x="787.5" y="471" width="5.7" height="1" fill="rgb(186, 234, 249)"/>
<rect x="788.5" y="472" width="4.7" height="1" fill="rgb(130, 217, 245)"/>
<rect x="787.5" y="473" width="5.7" height="1" fill="rgb(130, 217, 245)"/>
<rect x="787.5" y="474" width="5.7" height="1" fill="rgb(130, 217, 245)"/>
<rect x="787.5" y="475" width="5.7" height="1" fill="rgb(130, 217, 245)"/>
<rect x="787.5" y="476" width="5.7" height="1" fill="rgb(186, 234, 249)"/>
<rect x="787.5" y="477" width="5.7" height="1" fill="rgb(186, 234, 249)"/>
<rect x="788.5" y="478" width="4.7" height="1" fill="rgb(130, 217, 245)"/>
<rect x="788.5" y="479" width="4.7" height="1" fill="rgb(130, 217, 245)"/>
<rect x="787.5" y="480" width="5.7" height="1" fill="rgb(130, 217, 245)"/>
<rect x="787.5" y="481" width="5.7" height="1" fill="rgb(130, 217, 245)"/>
<rect x="787.5" y="482" width="5.7" height="1" fill="rgb(130, 217, 245)"/>
<rect x="787.5" y="483" width="5.7" height="1" fill="rgb(130, 217, 245)"/>
<rect x="787.5" y="484" width="5.7" height="1" fill="rgb(186, 234, 249)"/>
<rect x="788.5" y="485" width="4.7" height="1" fill="rgb(130, 217, 245)"/>
<rect x="788.5" y="486" width="4.7" height="1" fill="rgb(130, 217, 245)"/>
<rect x="787.5" y="487" width="5.7" height="1" fill="rgb(130, 217, 245)"/>
<rect x="788.5" y="488" width="4.7" height="0.5" fill="rgb(130, 217, 245)"/>
<rect x="783" y="77" width="4" height="1.3" fill="#111"/>
</svg>

<!-- empty bar -->
<div class="abs" style="left:6px;top:523px;width:788px;height:1px;background:#d0d0d0"></div>
<div class="abs" style="left:6px;top:524px;width:788px;height:13px;background:#f0eeee;border-bottom:1px solid #d8d8d8"></div>
<div class="abs" style="left:38px;top:524px;width:1px;height:13px;background:#d8d8d8"></div>
<div class="abs" style="left:72px;top:524px;width:1px;height:13px;background:#d8d8d8"></div>

<div id="status"></div>
<div class="leg" style="left:6px;background:#8af872"></div>
<div class="leg" style="left:19.5px;width:9.5px;background:#ff78b4"></div>
<div class="leg" style="left:31.5px;width:10px;background:#82d9f5"></div>
<svg class="abs" style="left:0;top:535px" width="45" height="16" viewBox="0 535 45 16"><path d="M9.2 544h3.4M10.9 542.4v3.2" stroke="#2a3a1a" stroke-width="1"/><path d="M22.6 543.2q1.2-0.6 2.2 0q1 0.6 2 0" stroke="#3a2a3a" stroke-width="1" fill="none"/><path d="M34 544.4h3.8" stroke="#1a2a3a" stroke-width="1.1"/></svg>
<div class="abs" style="left:48.5px;top:538.5px;font-size:7.3px;color:#1a1a1a;white-space:nowrap">172 lines added, 29 lines modified, 130 lines deleted.</div>

<div class="ln" style="left:7px;top:69.30px">1</div>
<div class="ln" style="left:7px;top:80.06px">2</div>
<div class="ln" style="left:7px;top:90.83px">3</div>
<div class="ln" style="left:7px;top:101.59px">4</div>
<div class="ln" style="left:7px;top:112.36px">5</div>
<div class="ln" style="left:7px;top:123.12px">6</div>
<div class="ln" style="left:7px;top:133.89px">7</div>
<div class="ln" style="left:7px;top:144.66px">8</div>
<div class="ln" style="left:7px;top:155.42px">9</div>
<div class="ln" style="left:7px;top:166.19px">10</div>
<div class="ln" style="left:7px;top:176.95px">11</div>
<div class="ln" style="left:7px;top:187.72px">12</div>
<div class="ln" style="left:7px;top:198.48px">13</div>
<div class="ln" style="left:7px;top:209.25px">14</div>
<div class="ln" style="left:7px;top:403.02px">15</div>
<div class="ln" style="left:7px;top:413.78px">16</div>
<div class="ln" style="left:396px;top:69.30px">1</div>
<div class="ln" style="left:396px;top:80.06px">2</div>
<div class="ln" style="left:396px;top:90.83px">3</div>
<div class="ln" style="left:396px;top:101.59px">4</div>
<div class="ln" style="left:396px;top:112.36px">5</div>
<div class="ln" style="left:396px;top:123.12px">6</div>
<div class="ln" style="left:396px;top:133.89px">7</div>
<div class="ln" style="left:396px;top:144.66px">8</div>
<div class="ln" style="left:396px;top:155.42px">9</div>
<div class="ln" style="left:396px;top:209.25px">10</div>
<div class="ln" style="left:396px;top:220.01px">11</div>
<div class="ln" style="left:396px;top:230.78px">12</div>
<div class="ln" style="left:396px;top:241.54px">13</div>
<div class="ln" style="left:396px;top:252.31px">14</div>
<div class="ln" style="left:396px;top:263.07px">15</div>
<div class="ln" style="left:396px;top:273.84px">16</div>
<div class="ln" style="left:396px;top:284.60px">17</div>
<div class="ln" style="left:396px;top:295.37px">18</div>
<div class="ln" style="left:396px;top:306.13px">19</div>
<div class="ln" style="left:396px;top:316.90px">20</div>
<div class="ln" style="left:396px;top:327.66px">21</div>
<div class="ln" style="left:396px;top:338.43px">22</div>
<div class="ln" style="left:396px;top:349.19px">23</div>
<div class="ln" style="left:396px;top:359.96px">24</div>
<div class="ln" style="left:396px;top:370.72px">25</div>
<div class="ln" style="left:396px;top:381.49px">26</div>
<div class="ln" style="left:396px;top:392.25px">27</div>
<div class="ln" style="left:396px;top:403.02px">28</div>
<div class="ln" style="left:396px;top:413.78px">29</div>
<div class="ln" style="left:396px;top:424.55px">30</div>
<div class="ln" style="left:396px;top:435.31px">31</div>
<div class="ln" style="left:396px;top:446.08px">32</div>
<div class="ln" style="left:396px;top:456.84px">33</div>
<div class="ln" style="left:396px;top:467.61px">34</div>
<div class="ln" style="left:396px;top:478.37px">35</div>
<div class="ln" style="left:396px;top:489.14px">36</div>
<div class="ln" style="left:396px;top:499.90px">37</div>
<!-- scrollbars -->
<svg class="abs" style="left:0;top:0;pointer-events:none" width="800" height="555" viewBox="0 0 800 555">
 <defs>
  <linearGradient id="thv" x1="0" y1="0" x2="1" y2="0"><stop offset="0" stop-color="#ececec"/><stop offset="0.5" stop-color="#dedede"/><stop offset="1" stop-color="#cdcdcd"/></linearGradient>
  <linearGradient id="thh" x1="0" y1="0" x2="0" y2="1"><stop offset="0" stop-color="#f0f0f0"/><stop offset="0.5" stop-color="#dfdfdf"/><stop offset="1" stop-color="#cecece"/></linearGradient>
 </defs>
 <g id="sbL">
  <rect x="381" y="67" width="11" height="444" fill="#f0f0f0"/>
  <rect x="381" y="67" width="1.2" height="444" fill="#e2e2e2"/>
  <path d="M383.6 75.2h4.8l-2.4-2.6z" fill="#444"/>
  <rect x="381.6" y="79.5" width="9" height="43.2" rx="1.5" fill="url(#thv)" stroke="#9f9f9f" stroke-width="0.8"/>
  <path d="M383 98.5h5M383 100.5h5M383 102.5h5" stroke="#6a6a6a" stroke-width="1"/>
  <path d="M383.6 504.2h4.8l-2.4 2.6z" fill="#444"/>
  <rect x="7" y="511" width="374" height="12" fill="#ebebeb"/>
  <path d="M13.6 513.8v4.8l-2.6-2.4z" fill="#444"/>
  <rect x="19.5" y="512.2" width="178" height="9.3" rx="1.5" fill="url(#thh)" stroke="#9f9f9f" stroke-width="0.8"/>
  <path d="M105.5 514.5v4.5M107.5 514.5v4.5M109.5 514.5v4.5" stroke="#6a6a6a" stroke-width="1"/>
  <path d="M373.4 513.8v4.8l2.6-2.4z" fill="#444"/>
  <rect x="381" y="511" width="11" height="12" fill="#f0f0f0"/>
 </g>
 <use href="#sbL" x="389" y="0"/>
</svg>

<div class="abs" style="left:554px;top:506px;width:240px;height:43px;background:#fff"></div>
<svg class="abs" style="left:554px;top:506px" width="240" height="43" viewBox="554 506 240 43">
 <g fill="#111"><circle cx="579.21" cy="516.34" r="8"/><circle cx="585.86" cy="522.99" r="8"/><circle cx="585.86" cy="532.41" r="8"/><circle cx="579.21" cy="539.06" r="8"/><circle cx="569.79" cy="539.06" r="8"/><circle cx="563.14" cy="532.41" r="8"/><circle cx="563.14" cy="522.99" r="8"/><circle cx="569.79" cy="516.34" r="8"/><circle cx="574.5" cy="527.7" r="12"/></g>
 <g fill="#1fb01f"><circle cx="579.21" cy="516.34" r="6"/><circle cx="585.86" cy="522.99" r="6"/><circle cx="585.86" cy="532.41" r="6"/><circle cx="579.21" cy="539.06" r="6"/><circle cx="569.79" cy="539.06" r="6"/><circle cx="563.14" cy="532.41" r="6"/><circle cx="563.14" cy="522.99" r="6"/><circle cx="569.79" cy="516.34" r="6"/><circle cx="574.5" cy="527.7" r="10.5"/></g>
 <path d="M574.5 510.5V523M557.0 527.7H570.0M592.0 527.7H579.0" stroke="#111" stroke-width="1.6"/>
 <path d="M571.5 524.7l-7.5-7.5M577.5 524.7l7.5-7.5M571.5 530.7l-7.5 7.5M577.5 530.7l7.5 7.5" stroke="#72dc72" stroke-width="1.5"/>
 <path d="M574.5 529.7V545.5" stroke="#1a961a" stroke-width="2.2"/>
 <path d="M753.5 530.6 L760.3 523.5 L767.8 533.4 L785.6 514.7 L792 521.1 L768.2 544.8 Z" fill="#22c022" stroke="#111" stroke-width="2" stroke-linejoin="miter"/>
 <g fill="#101b7e">
  <!-- T -->
  <circle cx="611.4" cy="523.8" r="2.9"/>
  <path d="M606.6 522.6 Q605.2 528.6 609.8 530.4 Q613.4 531.4 615.6 528.6" fill="none" stroke="#101b7e" stroke-width="1.5"/>
  <path d="M607.2 521.2 Q609.4 517.6 614 517.8 H636.6 V521.8 H613.6 Q610 521.4 607.2 521.2Z"/>
  <rect x="617" y="518" width="10" height="23"/>
  <rect x="614.3" y="540.2" width="16.4" height="2.9"/>
  <rect x="619.4" y="522" width="1" height="18" fill="#fff"/>
  <!-- A -->
  <path d="M633 543.1 L642.2 517.8 H647.8 L655.8 543.1 H648.6 L646.8 537.4 H640.8 L639.4 543.1 Z M641.8 533.6 H646 L644 526.2 Z" fill-rule="evenodd"/>
  <path d="M642.8 511.6 Q645 509.6 647 511 Q648.2 512.8 645.4 515.8" fill="none" stroke="#101b7e" stroke-width="1.6"/>
  <!-- I -->
  <circle cx="661.2" cy="524.4" r="2.6"/>
  <path d="M657.6 523.4 Q656.8 529 660.6 530.6 Q663.6 531.4 665.6 528.8" fill="none" stroke="#101b7e" stroke-width="1.4"/>
  <path d="M658 521.6 Q660.4 517.4 664 517.4 H677.6 V520 H664.4 Q661 520.4 658 521.6Z"/>
  <rect x="668" y="518" width="8.4" height="23"/>
  <rect x="665.7" y="540.1" width="13" height="2.6"/>
  <rect x="670.4" y="521" width="0.9" height="18.5" fill="#fff"/>
  <!-- V -->
  <circle cx="692.2" cy="524.4" r="2.6"/>
  <path d="M688.6 523.4 Q687.8 529 691.6 530.6 Q694.6 531.4 696.6 528.8" fill="none" stroke="#101b7e" stroke-width="1.4"/>
  <path d="M689 521.6 Q691.4 517.4 695 517.4 H702.9 V520 H695.4 Q692 520.4 689 521.6Z"/>
  <path d="M695.6 518 H703.2 L713.6 543 H709.2 Z"/>
  <path d="M698.6 521.5 L708.6 540.6" stroke="#fff" stroke-width="0.9"/>
  <path d="M717.6 517.6 H723.6 L712.6 543 H710.4 Z"/>
  <!-- E -->
  <path d="M720.3 517.4 H735.5 V522 H728.2 V527.4 H734 V531.8 H728.2 V538.4 H735.5 V543 H720.3 Z"/>
  <path d="M717.2 509.4 L721.6 513.2" stroke="#101b7e" stroke-width="2"/>
  <path d="M721 516.6 L727.6 511.6 L734.2 516.6" fill="none" stroke="#101b7e" stroke-width="2.2"/>
 </g>
</svg>

</body></html>
